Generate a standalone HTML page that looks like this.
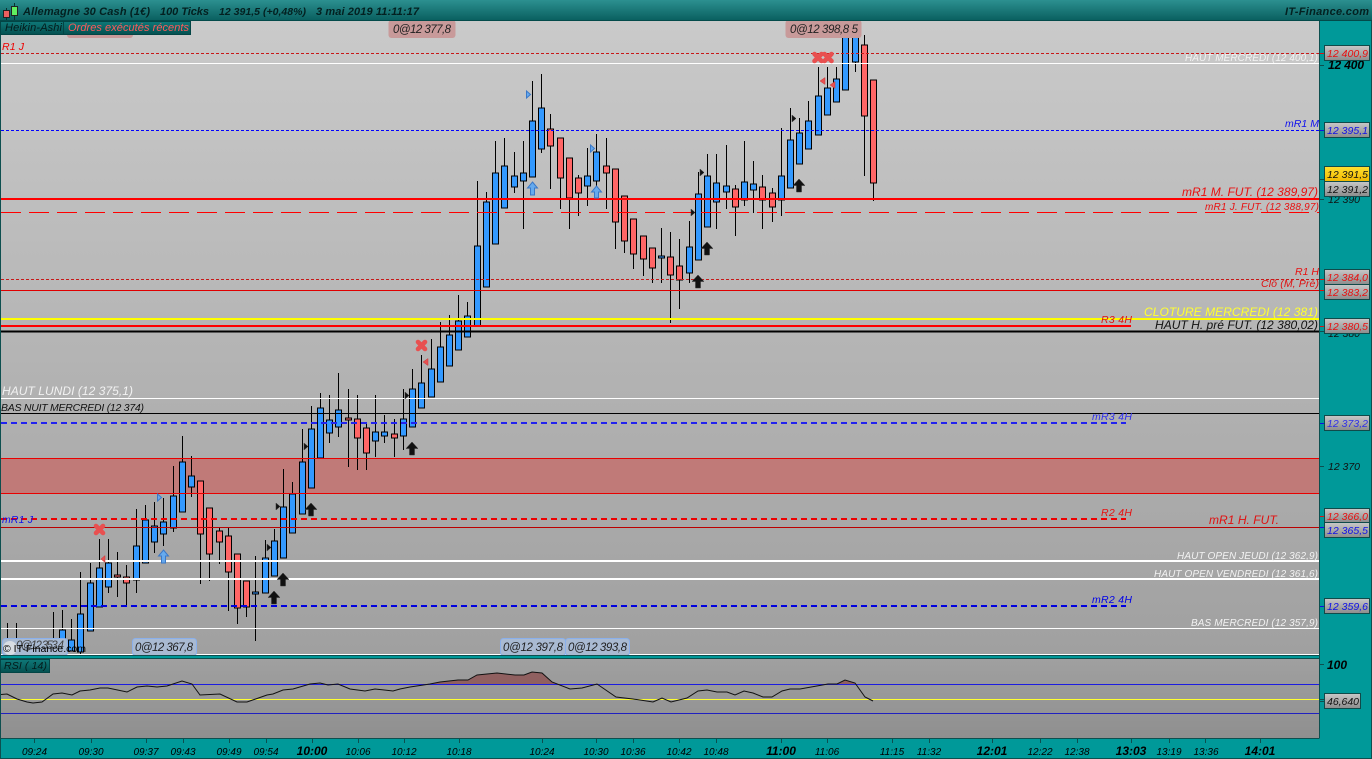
<!DOCTYPE html>
<html><head><meta charset="utf-8"><title>Allemagne 30 Cash</title>
<style>
html,body{margin:0;padding:0;background:#009999;overflow:hidden}
svg{display:block}
text{font-family:"Liberation Sans",sans-serif;font-style:italic}
.ax{font-size:10px;fill:#000;text-anchor:middle}
.axb{font-size:12px;font-weight:bold;fill:#000;text-anchor:middle}
.pl{font-size:10.5px}
</style></head><body>
<svg xmlns="http://www.w3.org/2000/svg" width="1372" height="759" viewBox="0 0 1372 759">
<defs>
<linearGradient id="bg" x1="0" y1="0" x2="0" y2="1"><stop offset="0" stop-color="#cacaca"/><stop offset="1" stop-color="#a0a0a0"/></linearGradient>
<linearGradient id="bg2" x1="0" y1="0" x2="0" y2="1"><stop offset="0" stop-color="#a0a0a0"/><stop offset="1" stop-color="#8f8f8f"/></linearGradient>
<linearGradient id="tb" x1="0" y1="0" x2="0" y2="1"><stop offset="0" stop-color="#2c9090"/><stop offset="1" stop-color="#0a6060"/></linearGradient>
<linearGradient id="lb" x1="0" y1="0" x2="0" y2="1"><stop offset="0" stop-color="#0f7878"/><stop offset="1" stop-color="#045050"/></linearGradient>
<linearGradient id="gb" x1="0" y1="0" x2="0" y2="1"><stop offset="0" stop-color="#c8c8c8"/><stop offset="1" stop-color="#8c8c8c"/></linearGradient>
<linearGradient id="yb" x1="0" y1="0" x2="0" y2="1"><stop offset="0" stop-color="#ffe030"/><stop offset="1" stop-color="#f0b800"/></linearGradient>
</defs>
<rect width="1372" height="759" fill="#009999"/>
<rect x="1" y="21" width="1318" height="634" fill="url(#bg)"/>
<rect x="1" y="659" width="1318" height="79" fill="url(#bg2)"/>
<!-- zone -->
<rect x="1" y="458" width="1318" height="36" fill="#c07a78"/>
<!-- hidden order label -->
<rect x="67" y="30" width="66" height="8" rx="3" fill="#c89a9a"/>
<!-- wicks -->
<path fill="none" stroke="#000" d="M7.5 623V650M16.5 623V650M53.5 612V650M62.5 610V650M71.5 619V650M80.5 572V655M90.5 563V631M99.5 539V607M108.5 539V593M117.5 552V597M126.5 565V606M136.5 509V593M145.5 505V563M154.5 502V553M163.5 498V546M173.5 466V532M182.5 436V512M191.5 456V497M200.5 481V584M209.5 508V581M219.5 528V564M228.5 528V611M237.5 554V624M246.5 581V617M255.5 556V641M265.5 540V593M274.5 529V576M283.5 469V558M292.5 482V533M302.5 429V514M311.5 406V488M320.5 393V458M329.5 395V443M338.5 373V437M348.5 389V467M357.5 395V470M366.5 423V470M375.5 395V457M384.5 415V443M394.5 419V457M403.5 389V450M412.5 369V427M421.5 355V408M431.5 339V397M440.5 322V382M449.5 315V366M458.5 295V350M467.5 302V337M477.5 181V326M486.5 192V287M495.5 141V244M504.5 138V208M514.5 152V193M523.5 141V229M532.5 81V177M541.5 74V153M550.5 114V189M560.5 138V209M569.5 158V229M578.5 175V216M587.5 148V206M596.5 134V197M606.5 138V209M615.5 169V249M624.5 196V253M633.5 219V269M643.5 236V276M652.5 248V283M661.5 228V283M670.5 232V323M679.5 239V309M689.5 221V283M698.5 172V260M707.5 154V227M716.5 154V229M726.5 145V209M735.5 185V236M744.5 141V206M753.5 161V213M762.5 175V229M772.5 188V222M781.5 128V216M790.5 108V188M799.5 118V164M808.5 101V149M818.5 67V135M827.5 67V115M836.5 67V102M845.5 28V90M855.5 28V72M864.5 35V176M873.5 80V201"/>
<!-- blue bodies -->
<g fill="#3399ff" stroke="#000">
<rect x="59.5" y="630" width="6" height="10"/><rect x="68.5" y="640" width="6" height="11"/><rect x="77.5" y="614" width="6" height="38"/><rect x="87.5" y="583" width="6" height="48"/><rect x="96.5" y="568" width="6" height="39"/><rect x="105.5" y="563" width="6" height="24"/><rect x="133.5" y="546" width="6" height="34"/><rect x="142.5" y="520" width="6" height="43"/><rect x="151.5" y="526" width="6" height="16"/><rect x="160.5" y="522" width="6" height="12"/><rect x="170.5" y="496" width="6" height="32"/><rect x="179.5" y="462" width="6" height="50"/><rect x="188.5" y="476" width="6" height="11"/><rect x="252.5" y="592" width="6" height="2"/><rect x="262.5" y="558" width="6" height="35"/><rect x="271.5" y="541" width="6" height="35"/><rect x="280.5" y="507" width="6" height="51"/><rect x="289.5" y="494" width="6" height="39"/><rect x="299.5" y="462" width="6" height="52"/><rect x="308.5" y="429" width="6" height="59"/><rect x="317.5" y="408" width="6" height="50"/><rect x="326.5" y="420" width="6" height="13"/><rect x="335.5" y="410" width="6" height="17"/><rect x="372.5" y="432" width="6" height="9"/><rect x="381.5" y="432" width="6" height="4"/><rect x="400.5" y="419" width="6" height="17"/><rect x="409.5" y="389" width="6" height="38"/><rect x="418.5" y="383" width="6" height="25"/><rect x="428.5" y="369" width="6" height="28"/><rect x="437.5" y="347" width="6" height="35"/><rect x="446.5" y="335" width="6" height="31"/><rect x="455.5" y="321" width="6" height="29"/><rect x="464.5" y="316" width="6" height="21"/><rect x="474.5" y="246" width="6" height="80"/><rect x="483.5" y="202" width="6" height="85"/><rect x="492.5" y="173" width="6" height="71"/><rect x="501.5" y="166" width="6" height="42"/><rect x="511.5" y="176" width="6" height="11"/><rect x="520.5" y="173" width="6" height="8"/><rect x="529.5" y="121" width="6" height="56"/><rect x="538.5" y="108" width="6" height="41"/><rect x="584.5" y="176" width="6" height="10"/><rect x="593.5" y="152" width="6" height="29"/><rect x="658.5" y="256" width="6" height="2"/><rect x="686.5" y="247" width="6" height="26"/><rect x="695.5" y="194" width="6" height="66"/><rect x="704.5" y="176" width="6" height="51"/><rect x="713.5" y="183" width="6" height="19"/><rect x="723.5" y="186" width="6" height="6"/><rect x="741.5" y="182" width="6" height="18"/><rect x="750.5" y="184" width="6" height="6"/><rect x="778.5" y="176" width="6" height="24"/><rect x="787.5" y="140" width="6" height="48"/><rect x="796.5" y="133" width="6" height="31"/><rect x="805.5" y="121" width="6" height="28"/><rect x="815.5" y="96" width="6" height="39"/><rect x="824.5" y="88" width="6" height="27"/><rect x="833.5" y="79" width="6" height="23"/><rect x="842.5" y="35" width="6" height="55"/><rect x="852.5" y="30" width="6" height="32"/>
</g>
<!-- red bodies -->
<g fill="#ff6666" stroke="#000">
<rect x="114.5" y="575" width="6" height="2"/><rect x="123.5" y="577" width="6" height="6"/><rect x="197.5" y="481" width="6" height="53"/><rect x="206.5" y="508" width="6" height="46"/><rect x="216.5" y="531" width="6" height="11"/><rect x="225.5" y="536" width="6" height="36"/><rect x="234.5" y="554" width="6" height="54"/><rect x="243.5" y="581" width="6" height="26"/><rect x="345.5" y="418" width="6" height="2"/><rect x="354.5" y="419" width="6" height="19"/><rect x="363.5" y="428" width="6" height="25"/><rect x="391.5" y="434" width="6" height="4"/><rect x="547.5" y="129" width="6" height="17"/><rect x="557.5" y="138" width="6" height="40"/><rect x="566.5" y="158" width="6" height="40"/><rect x="575.5" y="178" width="6" height="15"/><rect x="603.5" y="166" width="6" height="7"/><rect x="612.5" y="169" width="6" height="53"/><rect x="621.5" y="196" width="6" height="45"/><rect x="630.5" y="219" width="6" height="35"/><rect x="640.5" y="236" width="6" height="23"/><rect x="649.5" y="248" width="6" height="20"/><rect x="667.5" y="257" width="6" height="18"/><rect x="676.5" y="266" width="6" height="14"/><rect x="732.5" y="189" width="6" height="18"/><rect x="759.5" y="187" width="6" height="13"/><rect x="769.5" y="193" width="6" height="14"/><rect x="861.5" y="45" width="6" height="71"/><rect x="870.5" y="80" width="6" height="103"/>
</g>
<!-- horizontal lines -->
<g fill="none">
<path d="M1 53.5H1319" stroke="#c81818" stroke-dasharray="3 2"/>
<path d="M1 63.5H1319" stroke="#fff"/>
<path d="M1 130.5H1319" stroke="#0000ff" stroke-dasharray="3 2"/>
<path d="M1 199H1319" stroke="#ff0000" stroke-width="2"/>
<path d="M1 212.5H1319" stroke="#ff0000" stroke-dasharray="20 8"/>
<path d="M1 279.5H1319" stroke="#c81818" stroke-dasharray="3 2"/>
<path d="M1 290.5H1319" stroke="#e00000"/>
<path d="M1 319H1319" stroke="#ffff00" stroke-width="2"/>
<path d="M1 326H1131" stroke="#ff0000" stroke-width="2"/>
<path d="M1 331.5H1319" stroke="#000" stroke-width="2"/>
<path d="M1 398.5H1319" stroke="#fff"/>
<path d="M1 413.5H1319" stroke="#000"/>
<path d="M1 423H1126" stroke="#2222ee" stroke-width="2" stroke-dasharray="6 4"/>
<path d="M1 458.5H1319M1 493.5H1319" stroke="#e80000"/>
<path d="M1 519H1126" stroke="#ee0000" stroke-width="2" stroke-dasharray="6 4"/>
<path d="M1 527.5H1319" stroke="#bb0000"/>
<path d="M1 561H1319M1 579H1319" stroke="#fff" stroke-width="2"/>
<path d="M1 606H1126" stroke="#0000e0" stroke-width="2" stroke-dasharray="6 4"/>
<path d="M1 628.5H1319M1 654.5H1319" stroke="#fff"/>
</g>
<!-- markers: crosses -->
<g fill="none" stroke="#e85050" stroke-width="4.6" stroke-linecap="round">
<path d="M96 526L103 533M103 526L96 533M418 342L425 349M425 342L418 349M814.5 54L821.500 61M821.500 54L814.500 61M824.500 54L831.500 61M831.500 54L824.500 61"/>
</g>
<!-- black arrows -->
<g fill="#111" stroke="#333" stroke-width=".5">
<path d="M274 591l6 6.500h-3.500v6.500h-5v-6.500h-3.500zM283 573l6 6.500h-3.500v6.500h-5v-6.500h-3.500zM311 503l6 6.500h-3.500v6.500h-5v-6.500h-3.500zM412 442l6 6.500h-3.500v6.500h-5v-6.500h-3.500zM698 275l6 6.500h-3.500v6.500h-5v-6.500h-3.500zM707 242l6 6.500h-3.500v6.500h-5v-6.500h-3.500zM799 179l6 6.500h-3.500v6.500h-5v-6.500h-3.500z"/>
<path d="M276 503l4 3.500l-4 3.500zM267 544l4 3.500l-4 3.500zM304 443l4 3.500l-4 3.500zM405 392l4 3.500l-4 3.500zM700 169l4 3.500l-4 3.500zM792 115l4 3.500l-4 3.500zM691 209l4 3.500l-4 3.500z"/>
</g>
<!-- blue arrows -->
<g fill="#66aaee" stroke="#3a78c8">
<path d="M163.500 550l5 6h-3v7h-4v-7h-3zM532.500 182l5 6h-3v7h-4v-7h-3zM596.500 186l5 6h-3v6h-4v-6h-3z"/>
<path d="M157.500 494l4 3.500l-4 3.500zM526.500 91l4 3.500l-4 3.500zM590.500 145l4 3.500l-4 3.500z"/>
</g>
<g fill="#e85050" stroke="#c83838" stroke-width=".5">
<path d="M105 555.500l-4 3.500l4 3.500zM428 358.500l-5 3.500l5 3.500zM825 77.500l-5 3.500l5 3.500zM835 81.500l-5 3.500l5 3.500z"/>
</g>
<!-- order labels -->
<rect x="388.500" y="20" width="67" height="18" rx="3" fill="#c89a9a"/>
<rect x="785.500" y="20" width="76" height="18" rx="3" fill="#c89a9a"/>
<g fill="#a9bad2" stroke="#8ab0ec">
<rect x="2.500" y="638.500" width="65" height="17" rx="3"/>
<rect x="132.500" y="638.500" width="64" height="17" rx="3"/>
<rect x="500.500" y="638.500" width="65" height="17" rx="3"/>
<rect x="565.500" y="638.500" width="64" height="17" rx="3"/>
</g>
<g font-size="11.500" fill="#222">
<text x="393" y="33" textLength="58">0@12 377,8</text>
<text x="790" y="33" textLength="68">0@12 398,8 5</text>
<text x="135" y="651" textLength="58">0@12 367,8</text>
<text x="503" y="651" textLength="60">0@12 397,8</text>
<text x="568" y="651" textLength="59">0@12 393,8</text>
<text x="16" y="649" textLength="48" fill="#444">0@12 353,4</text>
</g>
<circle cx="10" cy="648" r="7" fill="#e8e8e8" opacity=".75"/>
<text x="3" y="652" font-size="10.500" fill="#000" textLength="83" style="font-style:normal">© IT-Finance.com</text>
<!-- chart text -->
<g>
<text x="2" y="50" font-size="10.500" fill="#ee0000" textLength="22">R1 J</text>
<text x="1185" y="61" font-size="10" fill="#f2f2f2" textLength="133">HAUT MERCREDI (12 400,1)</text>
<text x="1285" y="127" font-size="10.500" fill="#1010ee" textLength="34">mR1 M</text>
<text x="1182" y="196" font-size="12" fill="#e81010" textLength="136">mR1 M. FUT. (12 389,97)</text>
<text x="1205" y="210" font-size="10" fill="#e81010" textLength="114">mR1 J. FUT. (12 388,97)</text>
<text x="1295" y="275" font-size="10.500" fill="#e81010" textLength="24">R1 H</text>
<text x="1261" y="287" font-size="10.500" fill="#e01010" textLength="58">Clô (M, Pré)</text>
<text x="1144" y="316" font-size="12" fill="#ffff30" textLength="174">CLOTURE MERCREDI (12 381)</text>
<text x="1101" y="323" font-size="10.500" fill="#e01010" textLength="31">R3 4H</text>
<text x="1155" y="329" font-size="12" fill="#111" textLength="163">HAUT H. pré FUT. (12 380,02)</text>
<text x="2" y="395" font-size="12" fill="#f2f2f2" textLength="131">HAUT LUNDI (12 375,1)</text>
<text x="1" y="411" font-size="10.500" fill="#111" textLength="143">BAS NUIT MERCREDI (12 374)</text>
<text x="1092" y="420" font-size="10.500" fill="#3030ee" textLength="40">mR3 4H</text>
<text x="1101" y="516" font-size="10.500" fill="#e81010" textLength="31">R2 4H</text>
<text x="1209" y="524" font-size="12" fill="#e01010" textLength="70">mR1 H. FUT.</text>
<text x="2" y="523" font-size="10.500" fill="#1010ee" textLength="31">mR1 J</text>
<text x="1177" y="559" font-size="10" fill="#f2f2f2" textLength="141">HAUT OPEN JEUDI (12 362,9)</text>
<text x="1154" y="577" font-size="10" fill="#f2f2f2" textLength="164">HAUT OPEN VENDREDI (12 361,6)</text>
<text x="1092" y="603" font-size="10.500" fill="#0000e8" textLength="40">mR2 4H</text>
<text x="1191" y="626" font-size="10" fill="#f2f2f2" textLength="127">BAS MERCREDI (12 357,9)</text>
</g>
<!-- RSI -->
<path d="M430 684L440 682L458 680L468 680L477 675L497 673L515 675L524 675L532 672L542 673L552 682L556 684ZM838 684L845 680L855 683L855.500 684Z" fill="#906060"/>
<g fill="none">
<path d="M1 684.500H1319" stroke="#1c1ce0"/>
<path d="M1 699.500H1319" stroke="#ffff30"/>
<path d="M1 713.500H1319" stroke="#2020c0"/>
<path stroke="#111" d="M1 694.500L7 694L17 699L27 702L33 703L42 702L53 694L62 693L72 695L80 691L90 690L100 688L108 688L127 692L137 687L147 686L157 687L167 686L182 681L192 684L200 695L220 694L237 702L247 702L267 695L273 694L283 690L293 689L310 684L320 683L328 685L338 684L350 689L365 691L375 689L393 691L400 689L410 687L430 684L440 682L458 680L468 680L477 675L497 673L515 675L524 675L532 672L542 673L552 682L570 689L582 688L597 684L616 697L633 699L653 702L662 698L671 702L687 698L698 691L707 690L717 692L727 692L735 695L744 691L753 693L763 697L772 697L782 691L790 689L800 689L828 684L837 684L845 680L855 683L865 697L873 701"/>
</g>
<!-- pane borders -->
<g fill="none" stroke="#0d4f4f">
<path d="M0.500 20V759M1319.500 20V738.500M0 20.500H1372M0 655.500H1319M0 658.500H1319M0 738.500H1319M1371.500 0V759M0 758.500H1372"/>
</g>
<!-- title bar -->
<rect width="1372" height="20" fill="url(#tb)"/>
<path d="M0 20.500H1372" stroke="#034a4a"/>
<path d="M6.500 8V20M14.500 3V20" stroke="#0a3030"/>
<rect x="3.500" y="10.500" width="6" height="7" fill="#ee6060" stroke="#222"/>
<rect x="11.500" y="6.500" width="6" height="9" fill="#60ee60" stroke="#222"/>
<g font-size="11" font-weight="bold" fill="#032020">
<text x="23" y="15" textLength="127">Allemagne 30 Cash (1€)</text>
<text x="160" y="15" textLength="49">100 Ticks</text>
<text x="219" y="15" textLength="87" font-size="10.500">12 391,5 (+0,48%)</text>
<text x="316" y="15" textLength="103">3 mai 2019 11:11:17</text>
<text x="1285" y="15" textLength="84">IT-Finance.com</text>
</g>
<!-- top-left tags -->
<rect x="0.500" y="21.500" width="63" height="13" fill="url(#lb)" stroke="#034545"/>
<rect x="63.500" y="21.500" width="127" height="13" fill="url(#lb)" stroke="#034545"/>
<text x="5" y="31" font-size="11" fill="#041c1c" textLength="57">Heikin-Ashi</text>
<text x="68" y="31" font-size="11" fill="#ff5a5a" textLength="121">Ordres exécutés récents</text>
<rect x="0.500" y="659.500" width="49" height="13" fill="url(#lb)" stroke="#034545"/>
<text x="4" y="669" font-size="10.500" fill="#041c1c" textLength="43">RSI ( 14)</text>
<!-- right axis -->
<g fill="none" stroke="#0d4f4f">
<path d="M1320 65.500H1324M1320 179.500H1324M1320 199.500H1324M1320 331.500H1324M1320 466.500H1324M1320 664.500H1324M1320 699.500H1324M1320 701.500H1324"/>
</g>
<path d="M1320 53.500H1324M1320 279.500H1324M1320 290.500H1324M1320 326.500H1324M1320 516.500H1324" stroke="#e01010"/>
<path d="M1320 130.500H1324M1320 423.500H1324M1320 527.500H1324M1320 606.500H1324" stroke="#1010e0"/>
<text x="1328" y="69" font-size="12" font-weight="bold" fill="#000" textLength="36">12 400</text>
<text x="1328" y="203" font-size="10.500" fill="#111" textLength="32">12 390</text>
<text x="1328" y="337" font-size="10.500" fill="#111" textLength="32">12 380</text>
<text x="1328" y="470" font-size="10.500" fill="#111" textLength="32">12 370</text>
<text x="1327" y="669" font-size="12" font-weight="bold" fill="#000" textLength="20">100</text>
<g stroke="#104a4a" fill="url(#gb)">
<rect x="1324.500" y="45.500" width="45" height="15"/>
<rect x="1324.500" y="122.500" width="45" height="15"/>
<rect x="1324.500" y="181.500" width="45" height="15"/>
<rect x="1324.500" y="269.500" width="45" height="15"/>
<rect x="1324.500" y="284.500" width="45" height="15"/>
<rect x="1324.500" y="318.500" width="45" height="15"/>
<rect x="1324.500" y="415.500" width="45" height="15"/>
<rect x="1324.500" y="508.500" width="45" height="14"/>
<rect x="1324.500" y="522.500" width="45" height="15"/>
<rect x="1324.500" y="598.500" width="45" height="15"/>
<rect x="1324.500" y="693.500" width="36" height="15"/>
<rect x="1324.500" y="166.500" width="45" height="15" fill="url(#yb)"/>
</g>
<g>
<text x="1327" y="57" class="pl" fill="#e81010" textLength="41">12 400,9</text>
<text x="1327" y="134" class="pl" fill="#1010e8" textLength="41">12 395,1</text>
<text x="1327" y="178" class="pl" fill="#111" textLength="41">12 391,5</text>
<text x="1327" y="193" class="pl" fill="#111" textLength="41">12 391,2</text>
<text x="1327" y="281" class="pl" fill="#e81010" textLength="41">12 384,0</text>
<text x="1327" y="296" class="pl" fill="#e81010" textLength="41">12 383,2</text>
<text x="1327" y="330" class="pl" fill="#e81010" textLength="41">12 380,5</text>
<text x="1327" y="427" class="pl" fill="#3030e8" textLength="41">12 373,2</text>
<text x="1327" y="520" class="pl" fill="#e81010" textLength="41">12 366,0</text>
<text x="1327" y="534" class="pl" fill="#1010e8" textLength="41">12 365,5</text>
<text x="1327" y="610" class="pl" fill="#1010e8" textLength="41">12 359,6</text>
<text x="1327" y="705" class="pl" fill="#111" textLength="32">46,640</text>
</g>
<!-- time axis -->
<path fill="none" stroke="#0d4f4f" d="M34.500 739V743M91.500 739V743M146.500 739V743M183.500 739V743M229.500 739V743M266.500 739V743M312.500 739V743M358.500 739V743M404.500 739V743M459.500 739V743M542.500 739V743M596.500 739V743M633.500 739V743M679.500 739V743M716.500 739V743M781.500 739V743M827.500 739V743M892.500 739V743M929.500 739V743M992.500 739V743M1040.500 739V743M1077.500 739V743M1131.500 739V743M1169.500 739V743M1205.500 739V743M1260.500 739V743"/>
<g>
<text class="ax" x="34.500" y="755">09:24</text>
<text class="ax" x="91" y="755">09:30</text>
<text class="ax" x="146" y="755">09:37</text>
<text class="ax" x="183" y="755">09:43</text>
<text class="ax" x="229" y="755">09:49</text>
<text class="ax" x="266" y="755">09:54</text>
<text class="axb" x="312" y="755">10:00</text>
<text class="ax" x="358" y="755">10:06</text>
<text class="ax" x="404" y="755">10:12</text>
<text class="ax" x="459" y="755">10:18</text>
<text class="ax" x="542" y="755">10:24</text>
<text class="ax" x="596" y="755">10:30</text>
<text class="ax" x="633" y="755">10:36</text>
<text class="ax" x="679" y="755">10:42</text>
<text class="ax" x="716" y="755">10:48</text>
<text class="axb" x="781" y="755">11:00</text>
<text class="ax" x="827" y="755">11:06</text>
<text class="ax" x="892" y="755">11:15</text>
<text class="ax" x="929" y="755">11:32</text>
<text class="axb" x="992" y="755">12:01</text>
<text class="ax" x="1040" y="755">12:22</text>
<text class="ax" x="1077" y="755">12:38</text>
<text class="axb" x="1131" y="755">13:03</text>
<text class="ax" x="1169" y="755">13:19</text>
<text class="ax" x="1206" y="755">13:36</text>
<text class="axb" x="1260" y="755">14:01</text>
</g>
</svg>
</body></html>
